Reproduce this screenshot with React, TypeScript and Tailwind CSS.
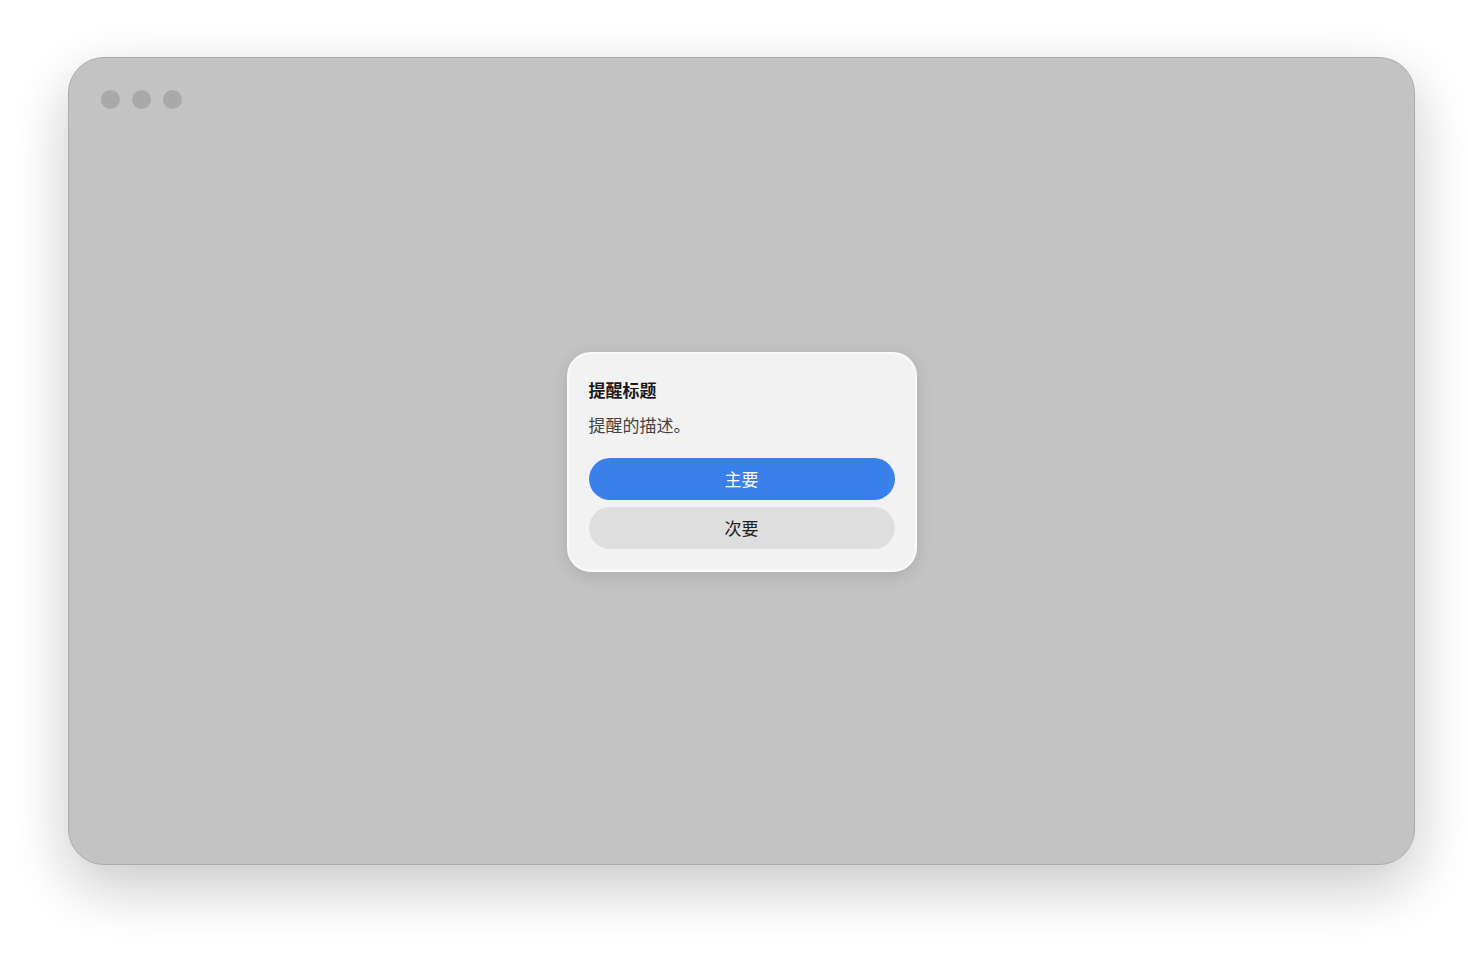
import { useState } from 'react'

const App = () => {
    const [picked, setPicked] = useState('')
    return (
        <div className="min-h-screen bg-white pl-[68px] pt-[57px]" style={{ fontFamily: '"Noto Sans CJK SC", "Noto Sans", sans-serif' }}>
            <div className="relative flex h-[808px] w-[1347px] items-center justify-center rounded-[36px] border border-[#ababab] bg-[#c3c3c3] shadow-[0_22px_60px_rgba(0,0,0,0.22)]">
                <div className="absolute left-[32px] top-[32px] flex gap-[12px]">
                    <span className="h-[19px] w-[19px] rounded-full bg-[#a9a9a9]" />
                    <span className="h-[19px] w-[19px] rounded-full bg-[#a9a9a9]" />
                    <span className="h-[19px] w-[19px] rounded-full bg-[#a9a9a9]" />
                </div>
                <div className="mt-[1px] w-[350px] rounded-[24px] border-2 border-[#fafafa] bg-[#f2f2f2] px-[20px] pb-[21px] pt-[26px] shadow-[0_4px_16px_rgba(0,0,0,0.12)]">
                    <div className="text-[17px] font-bold leading-[20px] text-[#1a1a1a]">提醒标题</div>
                    <div className="mt-[15px] text-[17px] leading-[20px] text-[#444]">提醒的描述。</div>
                    <div className="mt-[23px] flex flex-col gap-[7px]">
                        <button onClick={() => setPicked('main')} className="h-[42px] w-full rounded-full bg-[#3a80ea] text-[17px] text-white">主要</button>
                        <button onClick={() => setPicked('second')} className="h-[42px] w-full rounded-full bg-[#dedede] text-[17px] text-[#222]">次要</button>
                    </div>
                    <span className="hidden">{picked}</span>
                </div>
            </div>
        </div>
    )
}
export default App
